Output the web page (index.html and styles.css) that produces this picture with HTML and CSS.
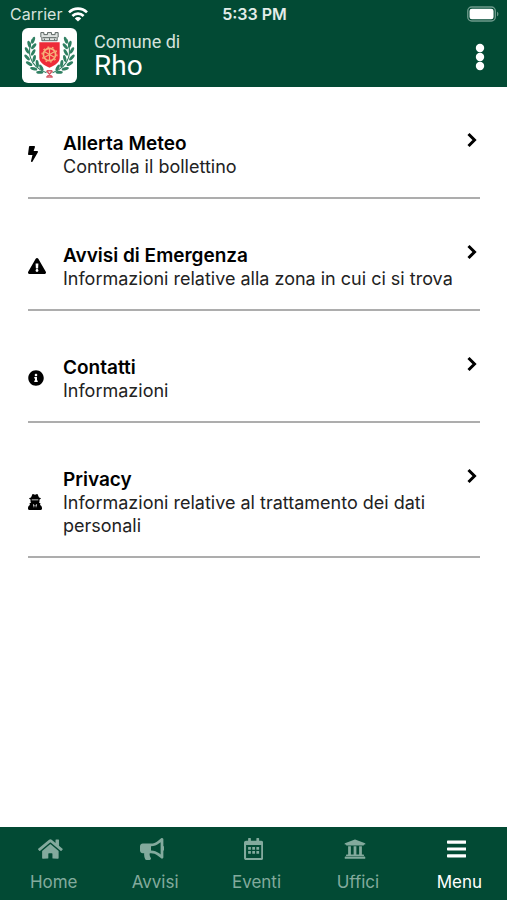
FILE: index.html
```html
<!DOCTYPE html>
<html lang="it">
<head>
  <meta charset="UTF-8" />
  <meta name="viewport" content="width=device-width, initial-scale=1" />
  <title>Comune di Rho</title>
  <link rel="stylesheet" href="styles.css">
</head>
<body>
  <header class="header">
    <div class="status">
      <div class="carrier">
        <span>Carrier</span>
        <svg class="wifi" viewBox="0 0 20 15" aria-hidden="true">
          <g fill="none" stroke="currentColor" stroke-width="2.6">
            <path d="M1 5.4a12.7 12.7 0 0 1 18 0" />
            <path d="M4.4 9a7.9 7.9 0 0 1 11.2 0" />
          </g>
          <path d="M10 14.6l-3.2-3.2a4.5 4.5 0 0 1 6.4 0z" fill="currentColor" />
        </svg>
      </div>
      <span class="time">5:33 PM</span>
      <svg class="battery" viewBox="0 0 33 16" aria-hidden="true">
        <rect x="0.8" y="0.8" width="28.4" height="14.4" rx="4" fill="none" stroke="#6d9a8b" stroke-width="1.4" />
        <rect x="2.6" y="2.6" width="24.8" height="10.8" rx="2.4" fill="#fff" />
        <path d="M31 5.6c1.8.7 1.8 4.1 0 4.8z" fill="#6d9a8b" />
      </svg>
    </div>

    <div class="brand">
      <!-- Stemma -->
      <svg class="logo" viewBox="0 0 54 54" role="img" aria-label="Stemma di Rho">
        <rect width="54" height="54" rx="6" fill="#fff" />
        <g fill="#dfe3e1" stroke="#4f5a57" stroke-width="0.9">
          <path d="M18.5 4.500h3v2h3.500v-2h4v2h3.500v-2h3v4.500l-1 1v2.500h-15v-2.500l-1-1z" />
          <path d="M20 9.500h14M22 12v-1.500M27 12v-2M32 12v-1.500" fill="none" />
        </g>
        <path d="M17 14h20v15c0 5-4.500 7.500-10 10-5.500-2.500-10-5-10-10z" fill="#ee2b38" />
        <g fill="none" stroke="#f6b27c">
          <circle cx="27" cy="26" r="6" stroke-width="1.7" />
          <circle cx="27" cy="26" r="7.3" stroke-width="1.3" stroke-dasharray="1.8 2.78" />
          <path d="M27 20v12M21.800 23l10.400 6M21.800 29l10.400-6" stroke-width="1.2" />
        </g>
        <g id="ramo">
          <path d="M10 11C5 23 6 37 24 44" fill="none" stroke="#2b7a5c" stroke-width="1" />
          <g fill="#2f8062">
            <ellipse cx="11" cy="12" rx="1.5" ry="3.5" transform="rotate(20 11 12)" />
            <ellipse cx="7" cy="16" rx="1.5" ry="3.5" transform="rotate(-15 7 16)" />
            <ellipse cx="11.5" cy="18" rx="1.5" ry="3.5" transform="rotate(40 11.5 18)" />
            <ellipse cx="5" cy="22" rx="1.5" ry="3.5" transform="rotate(-30 5 22)" />
            <ellipse cx="11" cy="24" rx="1.5" ry="3.5" transform="rotate(30 11 24)" />
            <ellipse cx="5" cy="29" rx="1.5" ry="3.6" transform="rotate(-42 5 29)" />
            <ellipse cx="12" cy="30" rx="1.5" ry="3.5" transform="rotate(12 12 30)" />
            <ellipse cx="7" cy="35" rx="1.5" ry="3.6" transform="rotate(-58 7 35)" />
            <ellipse cx="15" cy="35" rx="1.5" ry="3.5" transform="rotate(-8 15 35)" />
            <ellipse cx="11.5" cy="40" rx="1.5" ry="3.6" transform="rotate(-75 11.5 40)" />
            <ellipse cx="19" cy="39" rx="1.5" ry="3.5" transform="rotate(-28 19 39)" />
            <ellipse cx="17.5" cy="43.5" rx="1.5" ry="3.5" transform="rotate(-90 17.5 43.5)" />
          </g>
        </g>
        <use href="#ramo" transform="translate(54 0) scale(-1 1)" />
        <path d="M24 42l6 6.500M30 42l-6 6.500M24.500 42h5M24 48h6" fill="none" stroke="#d65c68" stroke-width="1.5" />
      </svg>
      <h1 class="title"><span class="title-small">Comune di</span> <span class="title-big">Rho</span></h1>
      <button class="more" type="button" aria-label="Altre opzioni">
        <svg viewBox="0 0 10 28" aria-hidden="true">
          <circle cx="5" cy="5" r="4.2" />
          <circle cx="5" cy="14" r="4.2" />
          <circle cx="5" cy="23" r="4.2" />
        </svg>
      </button>
    </div>
  </header>

  <main class="list">
    <a class="row" href="#meteo">
      <span class="icon">
        <svg viewBox="0 0 320 512" aria-hidden="true"><path d="M296 160H180.600l42.600-129.800C227.200 15 215.700 0 200 0H56C44 0 33.800 8.900 32.200 20.800l-32 240C-1.700 275.200 9.500 288 24 288h118.700L96.600 482.500c-3.600 15.200 8 29.500 23.300 29.500 8.400 0 16.400-4.400 20.800-12l176-304c9.300-15.900-2.200-36-20.700-36z" /></svg>
      </span>
      <span class="text">
        <strong>Allerta Meteo</strong>
        <span>Controlla il bollettino</span>
      </span>
      <svg class="chevron" viewBox="0 0 10 16" aria-hidden="true"><path d="M1.500 2l6 6-6 6" /></svg>
    </a>

    <a class="row" href="#emergenza">
      <span class="icon">
        <svg viewBox="0 0 576 512" aria-hidden="true"><path d="M569.517 440.013C587.975 472.007 564.806 512 527.940 512H48.054c-36.937 0-59.999-40.055-41.577-71.987L246.423 23.985c18.467-32.009 64.720-31.951 83.154 0l239.940 416.028zM288 354c-25.405 0-46 20.595-46 46s20.595 46 46 46 46-20.595 46-46-20.595-46-46-46zm-43.673-165.346l7.418 136c.347 6.364 5.609 11.346 11.982 11.346h48.546c6.373 0 11.635-4.982 11.982-11.346l7.418-136c.375-6.874-5.098-12.654-11.982-12.654h-63.383c-6.884 0-12.356 5.780-11.981 12.654z" /></svg>
      </span>
      <span class="text">
        <strong>Avvisi di Emergenza</strong>
        <span>Informazioni relative alla zona in cui ci si trova</span>
      </span>
      <svg class="chevron" viewBox="0 0 10 16" aria-hidden="true"><path d="M1.500 2l6 6-6 6" /></svg>
    </a>

    <a class="row" href="#contatti">
      <span class="icon">
        <svg viewBox="0 0 512 512" aria-hidden="true"><path d="M256 8C119.043 8 8 119.083 8 256c0 136.997 111.043 248 248 248s248-111.003 248-248C504 119.083 392.957 8 256 8zm0 110c23.196 0 42 18.804 42 42s-18.804 42-42 42-42-18.804-42-42 18.804-42 42-42zm56 254c0 6.627-5.373 12-12 12h-88c-6.627 0-12-5.373-12-12v-24c0-6.627 5.373-12 12-12h12v-64h-12c-6.627 0-12-5.373-12-12v-24c0-6.627 5.373-12 12-12h64c6.627 0 12 5.373 12 12v100h12c6.627 0 12 5.373 12 12v24z" /></svg>
      </span>
      <span class="text">
        <strong>Contatti</strong>
        <span>Informazioni</span>
      </span>
      <svg class="chevron" viewBox="0 0 10 16" aria-hidden="true"><path d="M1.500 2l6 6-6 6" /></svg>
    </a>

    <a class="row" href="#privacy">
      <span class="icon">
        <svg viewBox="0 0 14 16" aria-hidden="true">
          <path d="M3 3.600L4.300.6C4.600 0 5 0 5.500.2L7 .7 8.500.2c.5-.2.9-.2 1.200.4L11 3.600l1.500.5c.5.3.4.7 0 .9l-1 .5v1c0 1-.1 1.900-.4 2.600h.8c.5 0 .7.3.5.8l-.4 1c1.300.7 2 1.800 2 3.200v.7c0 .7-.5 1.200-1.200 1.200H1.200C.5 16 0 15.500 0 14.800v-.7c0-1.400.7-2.500 2-3.200l-.4-1c-.2-.5 0-.8.5-.8h.8c-.3-.7-.4-1.600-.4-2.600v-1L1.500 5c-.4-.2-.5-.6 0-.9z" />
          <path d="M3.700 5.500h6.600v.8H3.700zM4.900 10l1.600 1-.5 3zM9.100 10l-1.600 1 .5 3z" fill="#fff" />
        </svg>
      </span>
      <span class="text">
        <strong>Privacy</strong>
        <span>Informazioni relative al trattamento dei dati personali</span>
      </span>
      <svg class="chevron" viewBox="0 0 10 16" aria-hidden="true"><path d="M1.500 2l6 6-6 6" /></svg>
    </a>
  </main>

  <nav class="tabs">
    <a class="tab" href="#home">
      <svg viewBox="0 0 576 512" aria-hidden="true"><path d="M280.370 148.260L96 300.110V464a16 16 0 0 0 16 16l112.060-.29a16 16 0 0 0 15.920-16V368a16 16 0 0 1 16-16h64a16 16 0 0 1 16 16v95.640a16 16 0 0 0 16 16.050L464 480a16 16 0 0 0 16-16V300L295.670 148.260a12.190 12.190 0 0 0-15.300 0zM571.600 251.470L488 182.560V44.050a12 12 0 0 0-12-12h-56a12 12 0 0 0-12 12v72.610L318.470 43a48 48 0 0 0-61 0L4.340 251.470a12 12 0 0 0-1.600 16.900l25.500 31A12 12 0 0 0 45.150 301l235.220-193.740a12.190 12.190 0 0 1 15.300 0L530.900 301a12 12 0 0 0 16.900-1.600l25.500-31a12 12 0 0 0-1.700-16.930z" /></svg>
      <span>Home</span>
    </a>
    <a class="tab" href="#avvisi">
      <svg viewBox="0 0 576 512" aria-hidden="true"><path d="M576 240c0-23.630-12.950-44.040-32-55.120V32.010C544 23.260 537.020 0 512 0c-7.120 0-14.190 2.380-19.980 7.020l-85.030 68.030C364.280 109.190 310.660 128 256 128H64c-35.350 0-64 28.650-64 64v96c0 35.350 28.650 64 64 64h33.700c-1.390 10.480-2.180 21.140-2.180 32 0 39.770 9.260 77.350 25.560 110.940 5.190 10.690 16.520 17.060 28.400 17.060h74.280c26.050 0 41.690-29.840 25.900-50.560-16.400-21.520-26.150-48.360-26.150-77.440 0-11.110 1.620-21.790 4.410-32H256c54.660 0 108.280 18.810 150.980 52.950l85.030 68.030a32.023 32.023 0 0 0 19.980 7.020c24.920 0 32-22.780 32-32V295.130C563.050 284.040 576 263.630 576 240zm-96 141.420l-33.050-26.440C392.950 311.780 325.120 288 256 288v-96c69.120 0 136.950-23.780 190.950-66.980L480 98.580v282.840z" /></svg>
      <span>Avvisi</span>
    </a>
    <a class="tab" href="#eventi">
      <svg viewBox="0 0 448 512" aria-hidden="true"><path fill-rule="evenodd" d="M400 64h-48V12c0-7-5-12-12-12h-40c-7 0-12 5-12 12v52H160V12c0-7-5-12-12-12h-40c-7 0-12 5-12 12v52H48C21.500 64 0 85.500 0 112v352c0 26.500 21.500 48 48 48h352c26.500 0 48-21.500 48-48V112c0-26.500-21.500-48-48-48zM48 160h352v298c0 3-3 6-6 6H54c-3 0-6-3-6-6zM96 208h64v64H96zM192 208h64v64h-64zM288 208h64v64h-64zM96 304h64v64H96zM192 304h64v64h-64zM288 304h64v64h-64z" /></svg>
      <span>Eventi</span>
    </a>
    <a class="tab" href="#uffici">
      <svg viewBox="0 0 512 512" aria-hidden="true"><path d="M496 128v16a8 8 0 0 1-8 8h-24v12c0 6.627-5.373 12-12 12H60c-6.627 0-12-5.373-12-12v-12H24a8 8 0 0 1-8-8v-16a8 8 0 0 1 4.941-7.392l232-88a7.996 7.996 0 0 1 6.118 0l232 88A8 8 0 0 1 496 128zm-24 304H40c-13.255 0-24 10.745-24 24v16a8 8 0 0 0 8 8h464a8 8 0 0 0 8-8v-16c0-13.255-10.745-24-24-24zM96 192v192H60c-6.627 0-12 5.373-12 12v20h416v-20c0-6.627-5.373-12-12-12h-36V192h-64v192h-64V192h-64v192h-64V192H96z" /></svg>
      <span>Uffici</span>
    </a>
    <a class="tab active" href="#menu" aria-current="page">
      <svg viewBox="0 0 448 512" aria-hidden="true"><path d="M16 60h416a16 16 0 0 1 16 16v40a16 16 0 0 1-16 16H16a16 16 0 0 1-16-16V76a16 16 0 0 1 16-16zM16 220h416a16 16 0 0 1 16 16v40a16 16 0 0 1-16 16H16a16 16 0 0 1-16-16v-40a16 16 0 0 1 16-16zM16 380h416a16 16 0 0 1 16 16v40a16 16 0 0 1-16 16H16a16 16 0 0 1-16-16v-40a16 16 0 0 1 16-16z" /></svg>
      <span>Menu</span>
    </a>
  </nav>
</body>
</html>
```
FILE: styles.css
```css
* {
  box-sizing: border-box;
}

body {
  margin: 0;
  min-height: 100vh;
  display: flex;
  flex-direction: column;
  background-color: #ffffff;
  color: #000000;
  font-family: Inter, "Liberation Sans", sans-serif;
}

svg {
  display: block;
  fill: currentColor;
}

a {
  color: inherit;
  text-decoration: none;
}

/* Intestazione */
.header {
  background-color: #024a34;
  color: #ffffff;
  padding-bottom: 4px;
}

.status {
  display: grid;
  grid-template-columns: 1fr auto 1fr;
  align-items: center;
  height: 28px;
  padding: 0 8px 0 10px;
  font-size: 16px;
}

.carrier {
  display: flex;
  align-items: center;
  gap: 6px;
  color: #d5e2dd;
}

.wifi {
  width: 20px;
  height: 15px;
  color: #ffffff;
}

.time {
  font-weight: 600;
  color: #e3ece9;
}

.battery {
  width: 32px;
  height: 16px;
  justify-self: end;
}

.brand {
  display: flex;
  align-items: center;
  padding: 0 20px 0 22px;
}

.logo {
  width: 55px;
  height: 55px;
}

.title {
  flex: 1;
  margin: 0 0 0 17px;
  font-family: Roboto, sans-serif;
  font-weight: 400;
}

.title-small,
.title-big {
  display: block;
}

.title-small {
  font-size: 18px;
  line-height: 20px;
  color: #d5e2dd;
}

.title-big {
  font-size: 28px;
  line-height: 28px;
}

.more {
  border: 0;
  padding: 2px 2px 0;
  background: none;
  color: #ffffff;
  cursor: pointer;
}

.more svg {
  width: 10px;
  height: 28px;
}

/* Elenco voci */
.list {
  flex: 1;
  padding: 0 27px 0 28px;
}

.row {
  display: flex;
  align-items: center;
  padding: 45px 0 19px;
  border-bottom: 2px solid #adadad;
}

.icon {
  flex: none;
  width: 35px;
  padding-bottom: 2px;
}

.icon svg {
  height: 16px;
}

.text {
  flex: 1;
  font-size: 18px;
  line-height: 23px;
}

.text strong,
.text span {
  display: block;
}

.text strong {
  font-size: 19px;
  font-weight: 600;
}

.text span {
  color: #222222;
}

.chevron {
  align-self: flex-start;
  width: 10px;
  height: 16px;
  margin-right: 3px;
  fill: none;
  stroke: currentColor;
  stroke-width: 3;
}

/* Barra di navigazione */
.tabs {
  display: flex;
  background-color: #024a34;
  color: #83aa9d;
}

.tab {
  flex: 1;
  display: flex;
  flex-direction: column;
  align-items: center;
  gap: 11px;
  padding: 11px 0 7px;
  font-size: 17px;
  line-height: 22px;
}

.tab svg {
  height: 22px;
}

.tab span {
  padding-left: 6px;
}

.tab.active {
  color: #ffffff;
}
```
